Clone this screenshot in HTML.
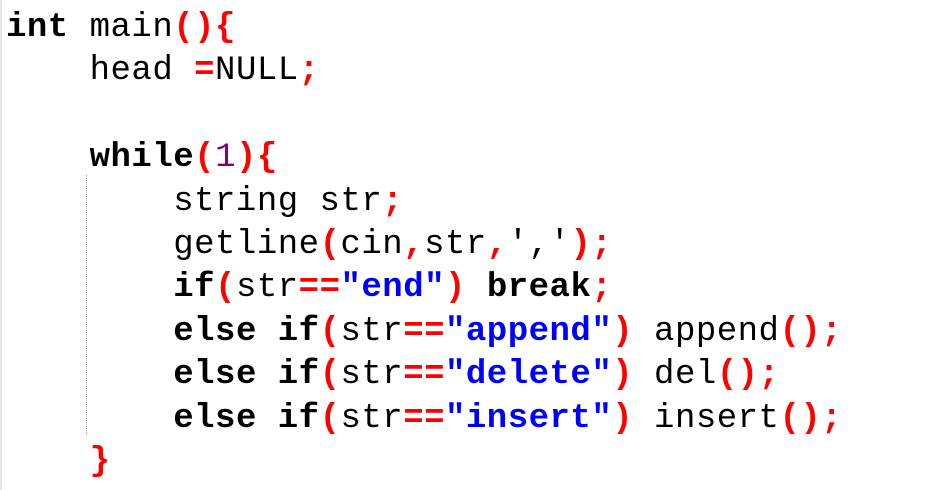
<!DOCTYPE html>
<html><head><meta charset="utf-8"><style>
html,body{margin:0;padding:0;background:#fff;width:930px;height:490px;overflow:hidden;position:relative}
#l{position:absolute;left:0;top:0;width:2px;height:490px;background:#e6e6e6}
#d{position:absolute;left:86px;top:175px;height:260px;border-left:1px dotted #aaa}
pre{position:absolute;left:6px;top:7px;margin:0;height:483px;overflow:hidden;font-family:"Liberation Mono",monospace;font-size:34px;line-height:43.4px;color:#000;letter-spacing:0.5px}
b{font-weight:bold}
.r{color:#f00;font-weight:bold}
.p{color:#800080}
.s{color:#00f;font-weight:bold}
</style></head><body>
<div id="l"></div><div id="d"></div>
<pre><b>int</b> main<span class="r">(){</span>
    head <span class="r">=</span>NULL<span class="r">;</span>

    <b>while</b><span class="r">(</span><span class="p">1</span><span class="r">){</span>
        string str<span class="r">;</span>
        getline<span class="r">(</span>cin<span class="r">,</span>str<span class="r">,</span>','<span class="r">);</span>
        <b>if</b><span class="r">(</span>str<span class="r">==</span><span class="s">"end"</span><span class="r">)</span> <b>break</b><span class="r">;</span>
        <b>else if</b><span class="r">(</span>str<span class="r">==</span><span class="s">"append"</span><span class="r">)</span> append<span class="r">();</span>
        <b>else if</b><span class="r">(</span>str<span class="r">==</span><span class="s">"delete"</span><span class="r">)</span> del<span class="r">();</span>
        <b>else if</b><span class="r">(</span>str<span class="r">==</span><span class="s">"insert"</span><span class="r">)</span> insert<span class="r">();</span>
    <span class="r">}</span>
    <b>return</b> 0<span class="r">;</span></pre>
</body></html>
